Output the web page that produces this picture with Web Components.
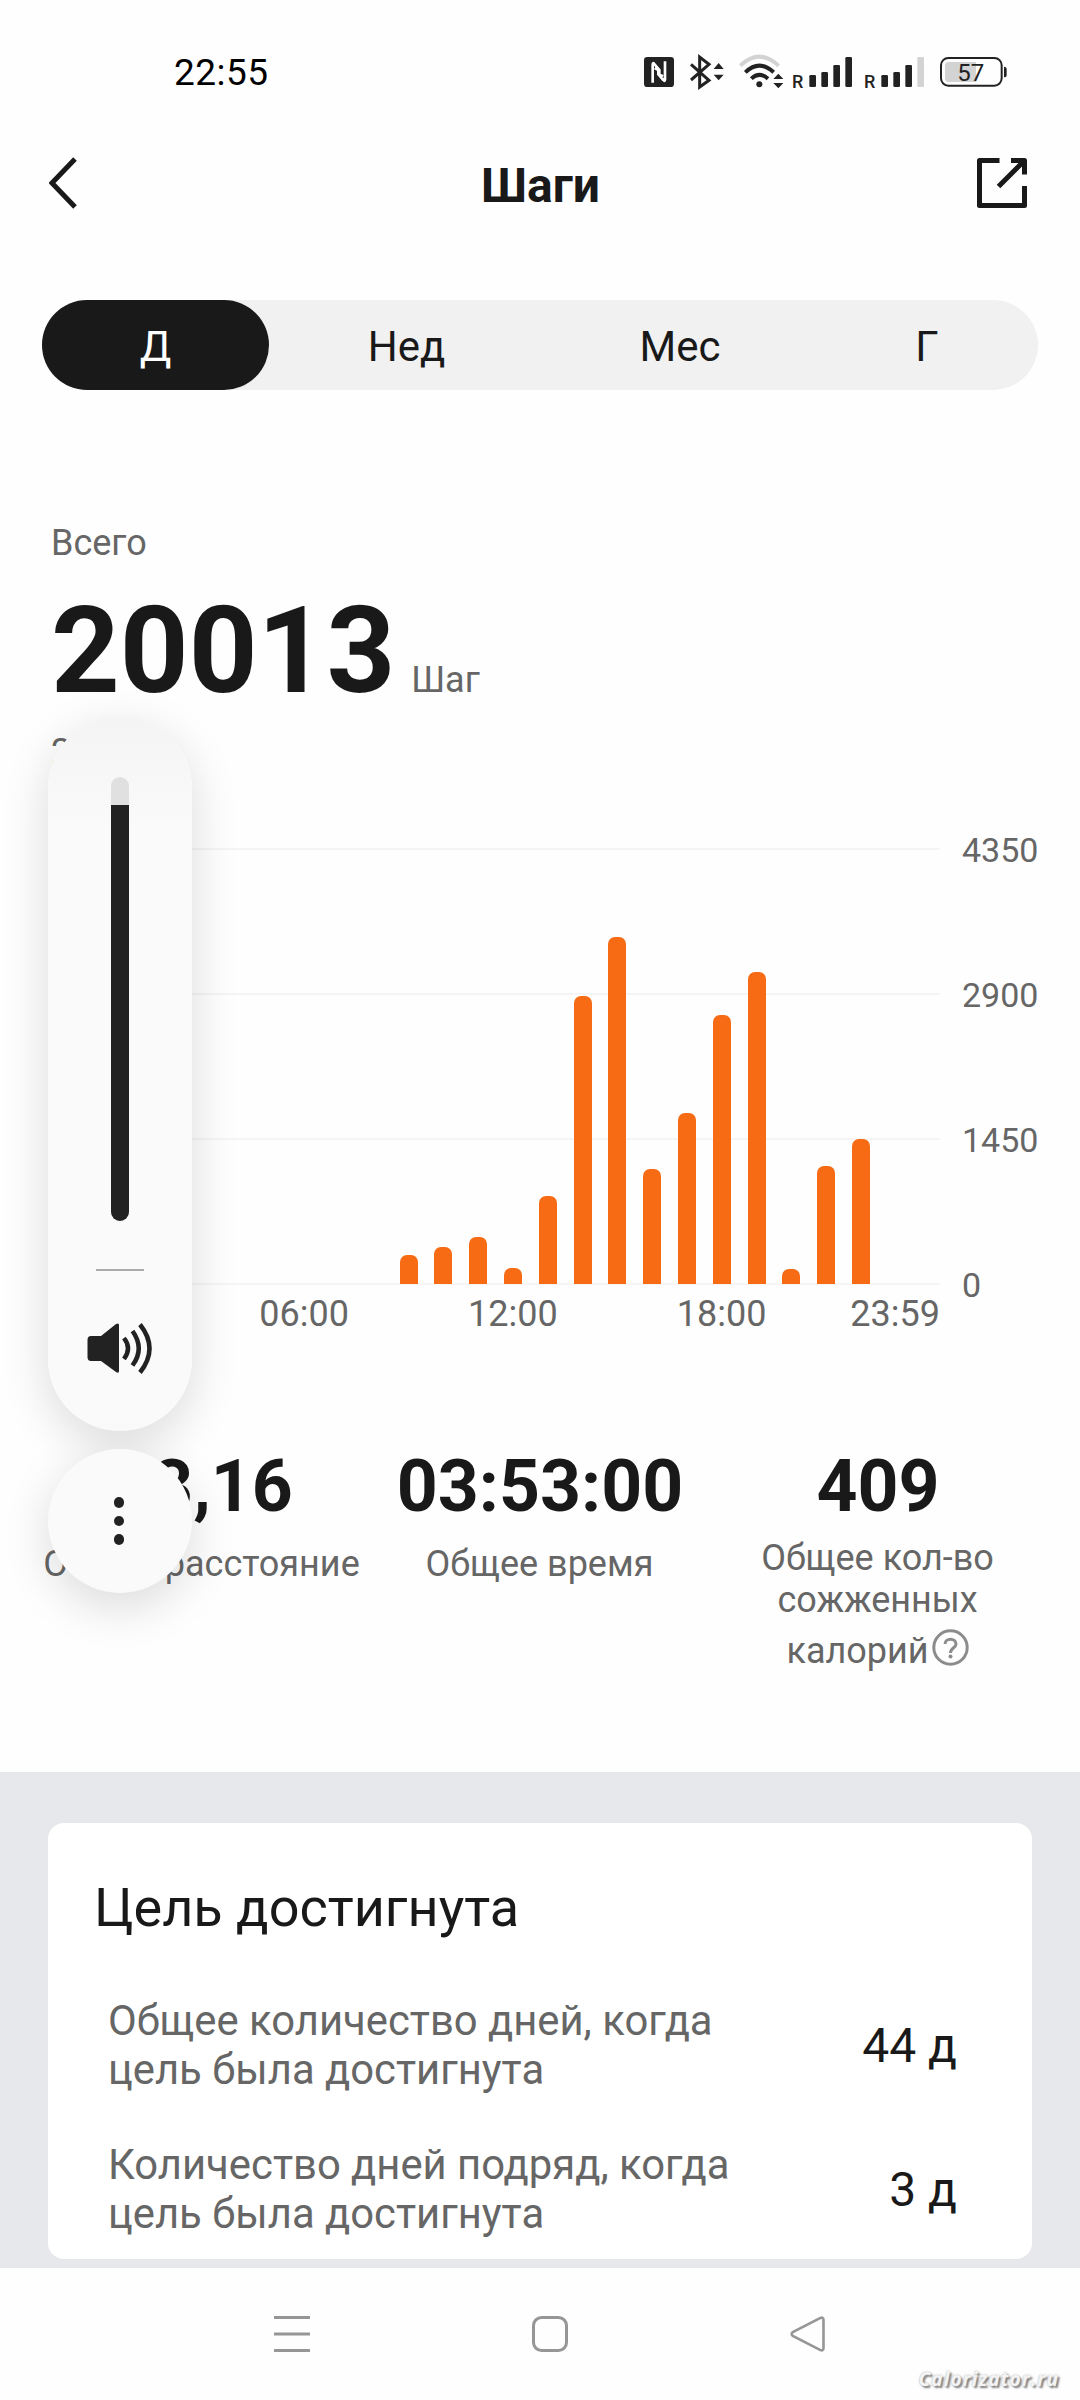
<!DOCTYPE html>
<html lang="ru">
<head>
<meta charset="utf-8">
<title>Шаги</title>
<style>
    body {
        margin: 0;
        width: 1080px;
        height: 2400px;
        position: relative;
        overflow: hidden;
        background: #fefefe;
        color: #191919;
        font-family: Roboto, "Liberation Sans", sans-serif;
    }
</style>
</head>
<body>
    <status-bar>22:55</status-bar>
    <page-header>Шаги</page-header>
    <period-tabs>
        <period-tab selected style="--w: 227">Д</period-tab>
        <period-tab style="--w: 275">Нед</period-tab>
        <period-tab style="--w: 272">Мес</period-tab>
        <period-tab style="--w: 222">Г</period-tab>
    </period-tabs>
    <steps-total value="20013" unit="Шаг">
        <span slot="label">Всего</span>
        <span slot="date">2</span>
    </steps-total>
    <steps-chart></steps-chart>
    <stats-row>
        <stat-item value="13,16">Общее расстояние</stat-item>
        <stat-item value="03:53:00">Общее время</stat-item>
        <stat-item value="409" help>Общее кол-во<br>сожженных<span slot="last">калорий</span></stat-item>
    </stats-row>
    <goal-card heading="Цель достигнута">
        <goal-row value="44 д">Общее количество дней, когда цель была достигнута</goal-row>
        <goal-row value="3 д">Количество дней подряд, когда цель была достигнута</goal-row>
    </goal-card>
    <nav-bar></nav-bar>
    <volume-panel></volume-panel>
    <site-mark>Calorizator.ru</site-mark>

<script>
class StatusBar extends HTMLElement {
    constructor() {
        super();
        this.attachShadow({ mode: 'open' });
        this.shadowRoot.innerHTML = `
        <style>
            :host {
                display: flex;
                justify-content: space-between;
                align-items: flex-start;
                padding: 40px 40px 0 174px;
                height: 70px;
                color: #000;
            }
            .time {
                font-size: 37px;
                line-height: 66px;
                letter-spacing: 0.5px;
            }
            svg { display: block; }
        </style>
        <div class="time"><slot></slot></div>
        <svg width="420" height="70" viewBox="0 0 1260 210" fill="#222" font-family="Roboto, sans-serif">
            <!-- nfc -->
            <rect x="72" y="51" width="90" height="90" rx="10"/>
            <path d="M98 128V74Q98 66 103 72L118 90V104L129 109M135 64V118Q135 126 130 120L115 103V90L104 84" fill="none" stroke="#fefefe" stroke-width="8"/>
            <!-- bluetooth -->
            <path d="M213 73L267 121L239 141V51L267 73L213 120" fill="none" stroke="#222" stroke-width="9"/>
            <path d="M281 87L296 69L311 87ZM281 104L296 121L311 104Z"/>
            <!-- wifi -->
            <g fill="none" stroke-width="12">
                <path d="M361 77Q418 23 476 77" stroke="#d3d3d3"/>
                <path d="M376 97Q418 57 461 97" stroke="#222"/>
                <path d="M394 116Q418 93 444 116" stroke="#222"/>
            </g>
            <circle cx="418" cy="133" r="9"/>
            <path d="M460 117L475 101L490 117ZM460 129L475 145L490 129Z"/>
            <!-- sim 1 -->
            <text x="516" y="144" font-size="54" font-weight="500">R</text>
            <rect x="568" y="105" width="20" height="36" rx="4"/>
            <rect x="604" y="96" width="20" height="45" rx="4"/>
            <rect x="640" y="75" width="20" height="66" rx="4"/>
            <rect x="676" y="51" width="20" height="90" rx="4"/>
            <!-- sim 2 -->
            <text x="732" y="144" font-size="54" font-weight="500">R</text>
            <rect x="784" y="105" width="20" height="36" rx="4"/>
            <rect x="820" y="96" width="20" height="45" rx="4"/>
            <rect x="856" y="75" width="20" height="66" rx="4"/>
            <rect x="892" y="51" width="20" height="90" rx="4" fill="#d3d3d3"/>
            <!-- battery -->
            <rect x="963" y="54" width="182" height="83" rx="22" fill="none" stroke="#222" stroke-width="6"/>
            <path d="M1068 66V126H987Q975 126 975 114V78Q975 66 987 66Z" fill="#d3d3d3"/>
            <path d="M1152 80Q1160 80 1160 88V104Q1160 112 1152 112Z"/>
            <text x="1012" y="123" font-size="72">57</text>
        </svg>
        `;
    }
}

class PageHeader extends HTMLElement {
    constructor() {
        super();
        this.attachShadow({ mode: 'open' });
        this.shadowRoot.innerHTML = `
        <style>
            :host {
                display: grid;
                grid-template-columns: 1fr auto 1fr;
                align-items: center;
                height: 146px;
                padding: 0 49px;
            }
            svg {
                display: block;
                fill: none;
                stroke: #191919;
            }
            .share { justify-self: end; }
            h1 {
                margin: 0;
                padding: 5px 0 0 1px;
                font-size: 48px;
                font-weight: 700;
                line-height: 56px;
            }
        </style>
        <svg width="30" height="52" viewBox="0 0 30 52" stroke-width="5"><path d="M26 2L3 26L26 50"/></svg>
        <h1><slot></slot></h1>
        <svg class="share" width="54" height="52" viewBox="0 0 54 52" stroke-width="5" stroke-linejoin="round">
            <path d="M22.500 3.500H2.500V48.500H47.500V29M34 3.500H47.500V17.500M21.500 29.500L47 4"/>
        </svg>
        `;
    }
}

class PeriodTabs extends HTMLElement {
    constructor() {
        super();
        this.attachShadow({ mode: 'open' });
        this.shadowRoot.innerHTML = `
        <style>
            :host {
                display: flex;
                margin: 44px 42px 0;
                height: 90px;
                border-radius: 45px;
                background: #f1f1f1;
            }
        </style>
        <slot></slot>
        `;
    }
}

class PeriodTab extends HTMLElement {
    constructor() {
        super();
        this.attachShadow({ mode: 'open' });
        this.shadowRoot.innerHTML = `
        <style>
            :host {
                display: flex;
                flex: var(--w) 0 0;
                justify-content: center;
                align-items: center;
                padding-top: 3px;
                box-sizing: border-box;
                border-radius: 45px;
                font-size: 42px;
            }
            :host([selected]) {
                background: #191919;
                color: #fff;
            }
        </style>
        <slot></slot>
        `;
    }
}

class StepsTotal extends HTMLElement {
    constructor() {
        super();
        this.attachShadow({ mode: 'open' });
        this.shadowRoot.innerHTML = `
        <style>
            :host {
                display: block;
                padding: 132px 51px 0;
                font-size: 36px;
                line-height: 42px;
                color: #666;
            }
            .total {
                display: flex;
                align-items: baseline;
                gap: 16px;
                margin: 17px 0 10px;
                height: 140px;
            }
            .value {
                font-size: 120px;
                font-weight: 700;
                line-height: 140px;
                color: #191919;
            }
            .date { height: 42px; }
        </style>
        <div><slot name="label"></slot></div>
        <div class="total">
            <span class="value">${this.getAttribute('value')}</span>
            <span>${this.getAttribute('unit')}</span>
        </div>
        <div class="date"><slot name="date"></slot></div>
        `;
    }
}

class StepsChart extends HTMLElement {
    constructor() {
        super();
        // steps per hour, 0 to 23
        this._hours = [0, 0, 0, 0, 0, 0, 0, 0, 0, 290, 370, 470, 165, 885, 2880, 3475, 1150, 1710, 2695, 3120, 155, 1185, 1450, 0];
        this._max = 4350;
        this.attachShadow({ mode: 'open' });
        this.shadowRoot.innerHTML = `
        <style>
            :host {
                display: grid;
                grid-template-columns: 898px 98px;
                margin: 75px 42px 0;
                color: #666;
            }
            .plot {
                display: grid;
                height: 437px;
            }
            .lines, .bars { grid-area: 1 / 1; }
            .lines, .scale {
                display: flex;
                flex-direction: column;
                justify-content: space-between;
            }
            .lines { margin-left: 36px; }
            .lines i {
                height: 2px;
                background: #f5f5f5;
            }
            .bars {
                display: flex;
                align-items: flex-end;
                height: 435px;
                padding: 1px 27px 1px 36px;
            }
            .slot {
                flex: 1;
                display: flex;
                justify-content: center;
            }
            .bar {
                width: 18px;
                border-radius: 7px 7px 0 0;
                background: #f76b15;
            }
            .scale {
                padding-left: 22px;
                margin: 1px 0 -1px;
                font-size: 34px;
                line-height: 2px;
            }
            .times {
                display: grid;
                grid-template-columns: repeat(24, 1fr);
                padding: 8px 27px 0 36px;
                font-size: 36px;
                line-height: 42px;
            }
            .times span { justify-self: center; }
            .times .last {
                grid-column: 22 / 25;
                justify-self: end;
                margin-right: -27px;
            }
        </style>
        <div class="plot">
            <div class="lines"><i></i><i></i><i></i><i></i></div>
            <div class="bars"></div>
        </div>
        <div class="scale"><span>4350</span><span>2900</span><span>1450</span><span>0</span></div>
        <div class="times">
            <span style="grid-column: 6 / 9">06:00</span>
            <span style="grid-column: 12 / 15">12:00</span>
            <span style="grid-column: 18 / 21">18:00</span>
            <span class="last">23:59</span>
        </div>
        `;
    }

    connectedCallback() {
        this.shadowRoot.querySelector('.bars').innerHTML = this._hours.map(steps =>
            `<div class="slot"><div class="bar" style="height: ${steps / this._max * 435}px"></div></div>`
        ).join('');
    }
}

class StatsRow extends HTMLElement {
    constructor() {
        super();
        this.attachShadow({ mode: 'open' });
        this.shadowRoot.innerHTML = `
        <style>
            :host {
                display: grid;
                grid-template-columns: repeat(3, 338px);
                justify-content: center;
                height: 226px;
                padding: 110px 1px 101px 0;
            }
        </style>
        <slot></slot>
        `;
    }
}

class StatItem extends HTMLElement {
    constructor() {
        super();
        this.attachShadow({ mode: 'open' });
        this.shadowRoot.innerHTML = `
        <style>
            :host {
                display: block;
                text-align: center;
                white-space: nowrap;
                font-size: 36px;
                line-height: 42px;
            }
            .value {
                padding-left: 1px;
                font-size: 71.500px;
                font-weight: 700;
                line-height: 84px;
            }
            .label {
                margin-top: 14px;
                color: #666;
            }
            :host([help]) .label { margin-top: 8px; }
            .last {
                display: none;
                justify-content: center;
                gap: 3px;
                margin-top: 9px;
            }
            svg { margin-top: -1px; }
            :host([help]) .last { display: flex; }
        </style>
        <div class="value">${this.getAttribute('value')}</div>
        <div class="label">
            <slot></slot>
            <div class="last">
                <slot name="last"></slot>
                <svg width="37" height="37" viewBox="0 0 37 37" fill="none" stroke="#8c8c8c" stroke-width="3">
                    <circle cx="18.500" cy="18.500" r="16.700"/>
                    <path d="M13 15C13 8.500 24 8.500 24 15C24 19 18.500 18.500 18.500 24"/>
                    <circle cx="18.500" cy="27.500" r="2" fill="#8c8c8c" stroke="none"/>
                </svg>
            </div>
        </div>
        `;
    }
}

class GoalCard extends HTMLElement {
    constructor() {
        super();
        this.attachShadow({ mode: 'open' });
        this.shadowRoot.innerHTML = `
        <style>
            :host {
                display: block;
                padding: 51px 48px 9px;
                background: #e7e8ec;
            }
            .card {
                box-sizing: border-box;
                height: 436px;
                padding: 53px 75px 0 60px;
                border-radius: 16px;
                background: #fff;
            }
            h2 {
                margin: 0 0 56px -14px;
                font-size: 54px;
                font-weight: 400;
                line-height: 64px;
            }
            .rows {
                display: flex;
                flex-direction: column;
                gap: 46px;
            }
        </style>
        <div class="card">
            <h2>${this.getAttribute('heading')}</h2>
            <div class="rows"><slot></slot></div>
        </div>
        `;
    }
}

class GoalRow extends HTMLElement {
    constructor() {
        super();
        this.attachShadow({ mode: 'open' });
        this.shadowRoot.innerHTML = `
        <style>
            :host {
                display: flex;
                justify-content: space-between;
                align-items: center;
                height: 98px;
            }
            .text {
                width: 660px;
                font-size: 41.800px;
                line-height: 49px;
                color: #666;
            }
            .value { font-size: 48px; }
        </style>
        <div class="text"><slot></slot></div>
        <div class="value">${this.getAttribute('value')}</div>
        `;
    }
}

class NavBar extends HTMLElement {
    constructor() {
        super();
        this.attachShadow({ mode: 'open' });
        this.shadowRoot.innerHTML = `
        <style>
            :host {
                display: flex;
                align-items: center;
                gap: 222px;
                height: 132px;
                padding-left: 274px;
            }
            svg {
                width: 36px;
                height: 36px;
                fill: none;
                stroke: #969696;
                stroke-width: 3;
            }
        </style>
        <svg viewBox="0 0 36 36"><path d="M0 1.500H36M0 18H36M0 34.500H36"/></svg>
        <svg viewBox="0 0 36 36"><rect x="1.500" y="1.500" width="33" height="33" rx="8"/></svg>
        <svg viewBox="0 0 36 36"><path d="M30 2.200L2.800 16Q0.500 18 2.800 20L30 33.800Q33.500 35.500 33.500 32V4Q33.500 0.500 30 2.200Z" stroke-width="2.600"/></svg>
        `;
    }
}

class VolumePanel extends HTMLElement {
    constructor() {
        super();
        this.attachShadow({ mode: 'open' });
        this.shadowRoot.innerHTML = `
        <style>
            :host {
                display: flex;
                flex-direction: column;
                gap: 18px;
                position: absolute;
                left: 48px;
                top: 716px;
                width: 144px;
            }
            .panel, .more {
                display: flex;
                flex-direction: column;
                align-items: center;
                box-sizing: border-box;
                border-radius: 72px;
                background: #fafafa;
                box-shadow: 0 14px 48px rgba(0, 0, 0, 0.14);
            }
            .panel {
                height: 715px;
                padding-top: 61px;
                background: linear-gradient(#f4f4f4, #fafafa 110px);
            }
            .slider {
                display: flex;
                align-items: flex-end;
                width: 18px;
                height: 444px;
                border-radius: 9px;
                overflow: hidden;
                background: #e0e0e0;
            }
            .level {
                width: 18px;
                height: 416px;
                background: #222;
            }
            .line {
                width: 48px;
                height: 2px;
                margin: 48px 0 52px;
                background: #aaa;
            }
            .more {
                justify-content: center;
                gap: 8px;
                height: 144px;
                padding-right: 2px;
            }
            .more i {
                width: 10.500px;
                height: 10.500px;
                border-radius: 50%;
                background: #222;
            }
        </style>
        <div class="panel">
            <div class="slider"><div class="level"></div></div>
            <div class="line"></div>
            <svg width="66" height="52" viewBox="0 0 66 52" fill="none" stroke="#222" stroke-width="4.500">
                <path d="M4 13H14L29 1Q32 -0.500 32 2V48Q32 51 29 49L14 38H4Q0.500 38 0.500 34V17Q0.500 13 4 13Z" fill="#222" stroke="none"/>
                <path d="M37 15Q45 25.500 37 36M45.500 8Q58 25.500 45.500 42.500M53 1.500Q72 25.500 53 49.500"/>
            </svg>
        </div>
        <div class="more"><i></i><i></i><i></i></div>
        `;
    }
}

class SiteMark extends HTMLElement {
    constructor() {
        super();
        this.attachShadow({ mode: 'open' });
        this.shadowRoot.innerHTML = `
        <style>
            :host {
                display: block;
                position: absolute;
                right: 21px;
                bottom: 10px;
                font: italic 700 19px/22px "Open Sans", sans-serif;
                letter-spacing: 1.100px;
                color: #f4f4f4;
                text-shadow: 0 0 2px #aaa, 2px 2px 2px #777;
            }
        </style>
        <slot></slot>
        `;
    }
}

customElements.define('status-bar', StatusBar);
customElements.define('page-header', PageHeader);
customElements.define('period-tabs', PeriodTabs);
customElements.define('period-tab', PeriodTab);
customElements.define('steps-total', StepsTotal);
customElements.define('steps-chart', StepsChart);
customElements.define('stats-row', StatsRow);
customElements.define('stat-item', StatItem);
customElements.define('goal-card', GoalCard);
customElements.define('goal-row', GoalRow);
customElements.define('nav-bar', NavBar);
customElements.define('volume-panel', VolumePanel);
customElements.define('site-mark', SiteMark);
</script>
</body>
</html>
